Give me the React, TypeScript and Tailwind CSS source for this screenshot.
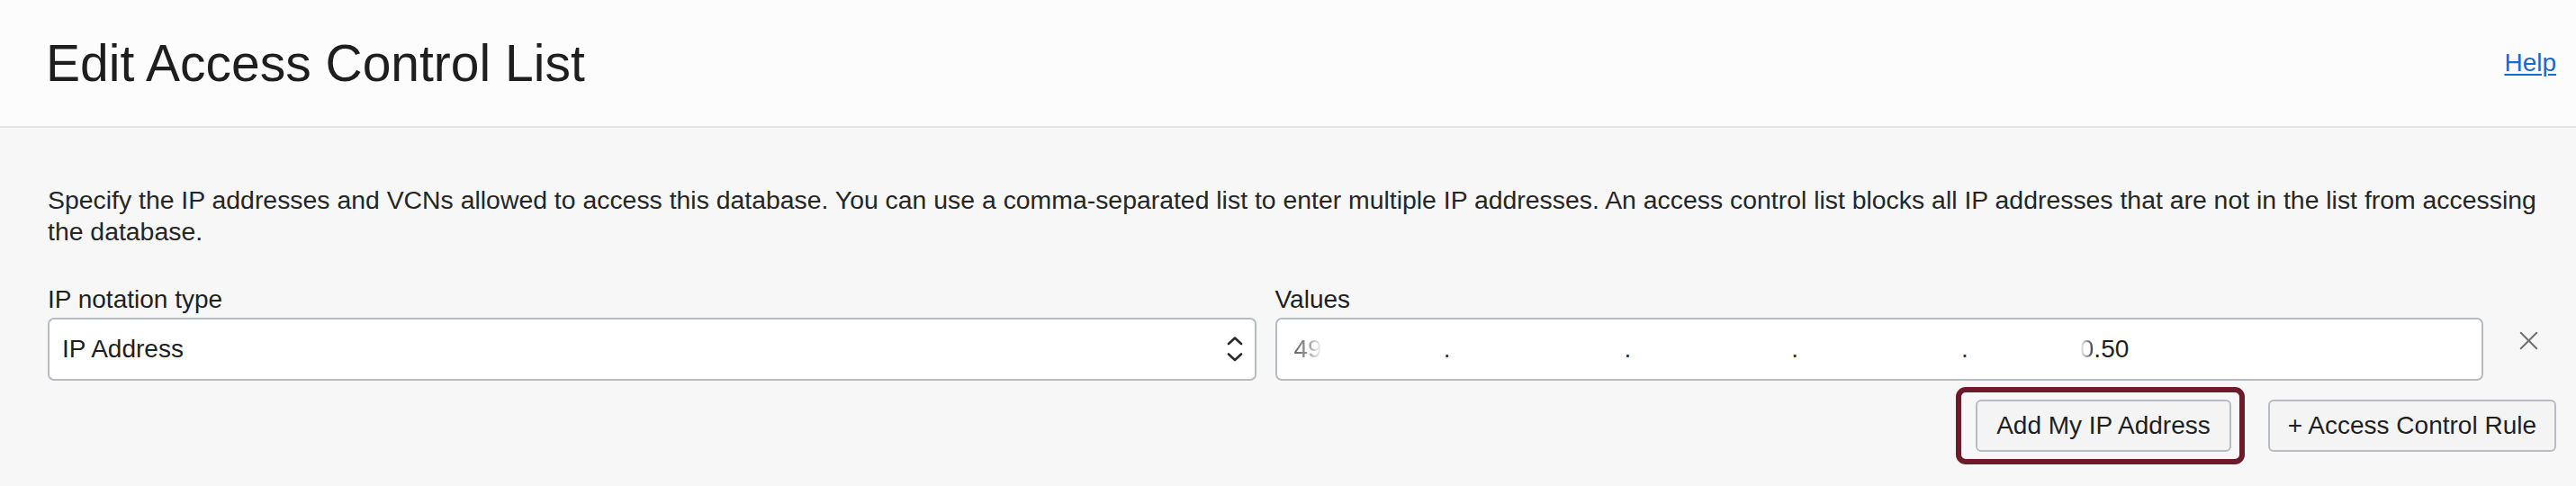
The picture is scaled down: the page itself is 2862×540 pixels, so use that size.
import { X } from 'lucide-react'

const FONT = { fontFamily: '"Liberation Sans", Arial, sans-serif' }

function Chevrons() {
  return (
    <svg width="18" height="28" viewBox="0 0 18 28" fill="none" stroke="#2a2a2a" strokeWidth="2.6" strokeLinecap="round" strokeLinejoin="round">
      <path d="M2 8 L9 1.5 L16 8" />
      <path d="M2 19.5 L9 26 L16 19.5" />
    </svg>
  )
}

function Field({ label, children }: { label: string; children: React.ReactNode }) {
  return (
    <div className="flex-1 flex flex-col min-w-0">
      <label className="text-[28px] leading-[34px] text-[#1f1f1f] mb-[3px]">{label}</label>
      {children}
    </div>
  )
}

export default function App() {
  return (
    <div className="min-h-[540px] bg-[#f7f7f7]" style={FONT}>
      {/* Header */}
      <div className="h-[142px] bg-[#fcfcfc] border-b-2 border-[#e5e5e5] flex items-center justify-between pl-[51px] pr-[22px]">
        <h1 className="text-[57px] leading-[56px] text-[#1e1e1e]">Edit Access Control List</h1>
        <a href="#" className="text-[28px] leading-[28px] text-[#1769d0] underline decoration-2 underline-offset-[3px]">
          Help
        </a>
      </div>

      {/* Body */}
      <div className="pl-[53px] pr-[22px] pt-[63px]">
        <p className="text-[28.4px] leading-[35px] text-[#262626]">
          Specify the IP addresses and VCNs allowed to access this database. You can use a comma-separated list to enter multiple IP addresses. An access control list blocks all IP addresses that are not in the list from accessing the database.
        </p>

        <div className="mt-[41px] flex items-end gap-[21px]">
          <Field label="IP notation type">
            <div className="h-[70px] bg-white border-2 border-[#b7bbc3] rounded-[7px] flex items-center justify-between pl-[14px] pr-[13px]">
              <span className="text-[28px] text-[#1f1f1f]">IP Address</span>
              <Chevrons />
            </div>
          </Field>
          <Field label="Values">
            <div className="h-[70px] bg-white border-2 border-[#b7bbc3] rounded-[7px] flex items-center pl-[19px] text-[28px] whitespace-nowrap">
              <span className="bg-linear-to-r from-[#666666] via-[#9a9a9a] to-[#ffffff] bg-clip-text text-transparent">49</span>
              <span className="ml-[135px] text-[#333]">.</span>
              <span className="ml-[193px] text-[#333]">.</span>
              <span className="ml-[178px] text-[#333]">.</span>
              <span className="ml-[181px] text-[#333]">.</span>
              <span className="ml-[124px] bg-linear-to-r from-[#ffffff] to-[#3a3a3a] bg-clip-text text-transparent">0</span>
              <span className="text-[#1f1f1f]">.50</span>
            </div>
          </Field>
          <div className="w-[60px] shrink-0 h-[70px] flex items-start pt-[8px] pl-[12px]">
            <X size={35} strokeWidth={1.4} className="text-[#707070]" />
          </div>
        </div>

        {/* Actions */}
        <div className="mt-[7px] flex items-center justify-end gap-[26px]">
          <div className="border-[6px] border-[#6d1a2b] rounded-[11px] pl-[16px] pr-[9px] py-[8px]">
            <button className="h-[58px] px-[21px] bg-[#f4f4f5] border-2 border-[#b7bbc3] rounded-[6px] text-[28px] text-[#1f1f1f]">
              Add My IP Address
            </button>
          </div>
          <button className="h-[58px] px-[20px] bg-[#f4f4f5] border-2 border-[#b7bbc3] rounded-[6px] text-[28px] text-[#1f1f1f]">
            + Access Control Rule
          </button>
        </div>
      </div>
    </div>
  )
}
